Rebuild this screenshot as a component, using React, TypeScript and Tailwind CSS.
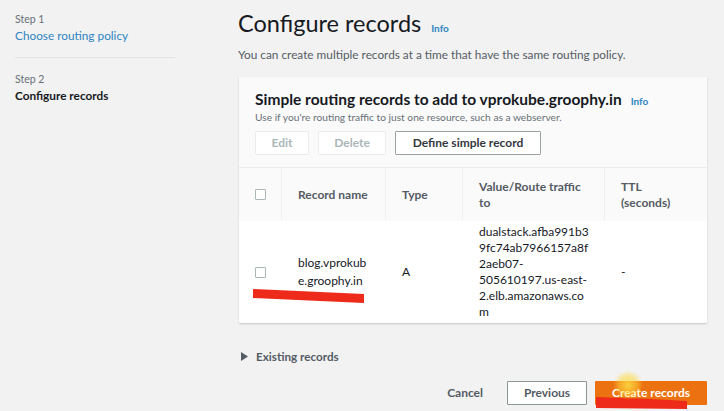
export default function App() {
  const font = { fontFamily: 'Lato, "Open Sans", Arial, sans-serif' };
  return (
    <div
      className="relative w-[724px] h-[411px] overflow-hidden bg-[#f2f2f2] flex text-[#16191f]"
      style={font}
    >
      {/* side steps */}
      <div className="w-[238px] shrink-0 pl-[15px] pr-[63px] pt-[12px]">
        <div className="text-[10.5px] leading-[14px] text-[#687078]">Step 1</div>
        <div className="text-[11.8px] leading-[18px] text-[#2e84c2] mt-[1px]">Choose routing policy</div>
        <div className="h-px bg-[#e4e4e4] mt-[12px]" />
        <div className="text-[10.5px] leading-[14px] text-[#687078] mt-[14px]">Step 2</div>
        <div className="text-[11.8px] leading-[18px] font-bold text-[#16191f] mt-[1px]">Configure records</div>
      </div>

      {/* main */}
      <div className="flex-1 pt-[7px] pr-[17px]">
        <div className="flex items-baseline gap-[10px]">
          <h1 className="text-[23.5px] leading-[32px] font-normal text-[#16191f]">Configure records</h1>
          <span className="text-[10px] font-bold text-[#2e84c2]">Info</span>
        </div>
        <p className="text-[11.8px] leading-[18px] text-[#545b64] mt-[7px] whitespace-nowrap">
          You can create multiple records at a time that have the same routing policy.
        </p>

        <div className="ml-[1px] mt-[13px] bg-white shadow-[0_1px_2px_rgba(0,0,0,0.18)] rounded-[1px]">
          <div className="bg-[#fafafa] px-[16px] pt-[11px] pb-[12px] border-b border-[#eaeded]">
            <div className="flex items-baseline gap-[9px] whitespace-nowrap">
              <span className="text-[15.5px] leading-[22px] font-bold text-[#16191f]">
                Simple routing records to add to vprokube.groophy.in
              </span>
              <span className="text-[10px] font-bold text-[#2e84c2]">Info</span>
            </div>
            <div className="text-[10.2px] leading-[14px] text-[#687078] whitespace-nowrap">
              Use if you're routing traffic to just one resource, such as a webserver.
            </div>
            <div className="flex gap-[9px] mt-[7px]">
              <button className="h-[24px] w-[54px] bg-white border border-[#eaeded] text-[12px] font-bold text-[#aab7b8] rounded-[1px]">
                Edit
              </button>
              <button className="h-[24px] w-[68px] bg-white border border-[#eaeded] text-[12px] font-bold text-[#aab7b8] rounded-[1px]">
                Delete
              </button>
              <button className="h-[24px] w-[146px] bg-white border border-[#9aa2a3] text-[12px] font-bold text-[#33383d] rounded-[1px]">
                Define simple record
              </button>
            </div>
          </div>

          {/* table */}
          <div className="grid grid-cols-[43px_104px_77px_142px_1fr]">
            <div className="bg-[#fafafa] h-[53px] flex items-center pl-[16px] border-r border-[#f0f0f0]">
              <span className="w-[11px] h-[11px] border border-[#aab7b8] bg-white rounded-[1px]" />
            </div>
            <div className="bg-[#fafafa] h-[53px] flex items-center pl-[16px] text-[12px] font-bold text-[#545b64] border-r border-[#f0f0f0]">
              Record name
            </div>
            <div className="bg-[#fafafa] h-[53px] flex items-center pl-[16px] text-[12px] font-bold text-[#545b64] border-r border-[#f0f0f0]">
              Type
            </div>
            <div className="bg-[#fafafa] h-[53px] flex items-center pl-[16px] text-[12px] leading-[16px] font-bold text-[#545b64] border-r border-[#f0f0f0]">
              Value/Route traffic
              <br />
              to
            </div>
            <div className="bg-[#fafafa] h-[53px] flex items-center pl-[16px] text-[12px] leading-[16px] font-bold text-[#545b64]">
              TTL
              <br />
              (seconds)
            </div>

            <div className="h-[102px] flex items-center pl-[16px]">
              <span className="w-[11px] h-[11px] border border-[#aab7b8] bg-white rounded-[1px]" />
            </div>
            <div className="h-[102px] flex items-center pl-[16px] text-[12px] leading-[18px] text-[#16191f]">
              <span>
                blog.vprokub
                <br />
                e.groophy.in
              </span>
            </div>
            <div className="h-[102px] flex items-center pl-[16px] text-[12px] text-[#16191f]">A</div>
            <div className="h-[102px] flex items-center pl-[16px] text-[12px] leading-[16px] text-[#16191f]">
              <span>
                dualstack.afba991b3
                <br />
                9fc74ab7966157a8f
                <br />
                2aeb07-
                <br />
                505610197.us-east-
                <br />
                2.elb.amazonaws.co
                <br />m
              </span>
            </div>
            <div className="h-[102px] flex items-center pl-[16px] text-[12px] text-[#16191f]">-</div>
          </div>
        </div>

        <div className="flex items-center gap-[8px] mt-[25px] ml-[3px]">
          <svg width="7" height="9" viewBox="0 0 7 9">
            <path d="M0 0 L7 4.5 L0 9 Z" fill="#545b64" />
          </svg>
          <span className="text-[11.7px] font-bold text-[#545b64]">Existing records</span>
        </div>

        <div className="flex items-center justify-end gap-[8px] mt-[15px]">
          <button className="h-[24px] px-[16px] text-[12px] font-bold text-[#545b64]">Cancel</button>
          <button className="h-[24px] w-[80px] bg-white border border-[#8d9696] text-[12px] font-bold text-[#545b64] rounded-[1px]">
            Previous
          </button>
          <button className="h-[24px] w-[112px] bg-[#ec7211] text-[12px] font-bold text-white rounded-[1px]">
            Create records
          </button>
        </div>
      </div>

      {/* annotations drawn over the screenshot */}
      <svg className="absolute inset-0 pointer-events-none" width="724" height="411" viewBox="0 0 724 411">
        <defs>
          <radialGradient id="glow">
            <stop offset="0%" stopColor="#ffe14a" stopOpacity="0.85" />
            <stop offset="60%" stopColor="#ffd83a" stopOpacity="0.5" />
            <stop offset="100%" stopColor="#ffd83a" stopOpacity="0" />
          </radialGradient>
        </defs>
        <polygon points="253,289 364,294 364,303 253,298" fill="#ee2a1a" />
        <polygon points="596,397 650,399 687,401 687,409 596,408" fill="#ee2a1a" />
        <circle cx="628" cy="385" r="15" fill="url(#glow)" />
      </svg>
    </div>
  );
}
